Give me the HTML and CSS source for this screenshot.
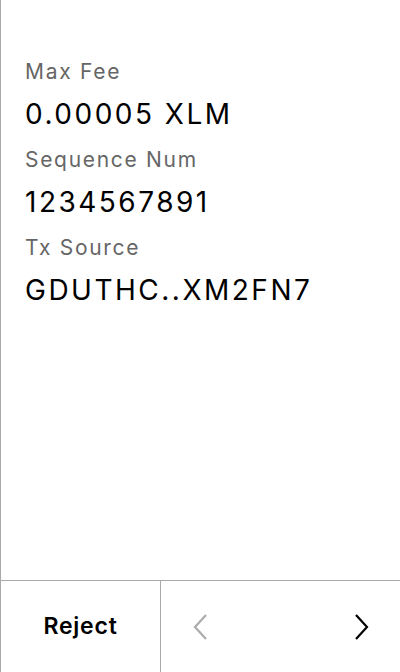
FILE: index.html
```html
<!DOCTYPE html>
<html>
<head>
<meta charset="utf-8">
<link rel="stylesheet" href="styles.css">
</head>
<body>
<div class="screen">
  <main class="content">
    <div class="field">
      <div class="label">Max Fee</div>
      <div class="value">0.00005 XLM</div>
    </div>
    <div class="field">
      <div class="label">Sequence Num</div>
      <div class="value">1234567891</div>
    </div>
    <div class="field">
      <div class="label">Tx Source</div>
      <div class="value">GDUTHC..XM2FN7</div>
    </div>
  </main>
  <footer class="footer">
    <button class="reject">Reject</button>
    <div class="nav">
      <svg class="chev prev" width="14" height="26" viewBox="0 0 14 26"><path d="M13 1 L2 13 L13 25" fill="none" stroke="#ababab" stroke-width="2.2"/></svg>
      <svg class="chev next" width="14" height="26" viewBox="0 0 14 26"><path d="M1 1 L12 13 L1 25" fill="none" stroke="#000" stroke-width="2.2"/></svg>
    </div>
  </footer>
</div>
</body>
</html>
```

FILE: styles.css
```css
html, body {
  margin: 0;
  padding: 0;
  background: #fff;
}
body {
  font-family: Inter, "Liberation Sans", sans-serif;
  color: #000;
}
.screen {
  width: 400px;
  height: 672px;
  box-sizing: border-box;
  border-left: 1px solid #aaaaaa;
  display: flex;
  flex-direction: column;
}
.content {
  flex: 1;
  padding: 58px 0 0 24px;
  display: flex;
  flex-direction: column;
  gap: 15px;
}
.field {
  display: flex;
  flex-direction: column;
  gap: 11px;
}
.label {
  font-size: 21px;
  line-height: 28px;
  letter-spacing: 1.7px;
  color: #666;
}
.value {
  font-size: 28px;
  line-height: 34px;
  letter-spacing: 2.5px;
  color: #000;
}
.footer {
  height: 92px;
  box-sizing: border-box;
  border-top: 1px solid #aaaaaa;
  display: flex;
}
.reject {
  width: 160px;
  border: none;
  border-right: 1px solid #aaaaaa;
  background: none;
  font-family: Inter, "Liberation Sans", sans-serif;
  font-weight: 600;
  font-size: 23px;
  letter-spacing: 0.8px;
  color: #000;
  padding: 0 0 2px 0;
}
.nav {
  flex: 1;
  display: flex;
  align-items: center;
  justify-content: space-between;
  padding: 0 31px 0 32px;
}
.chev {
  display: block;
}
```
